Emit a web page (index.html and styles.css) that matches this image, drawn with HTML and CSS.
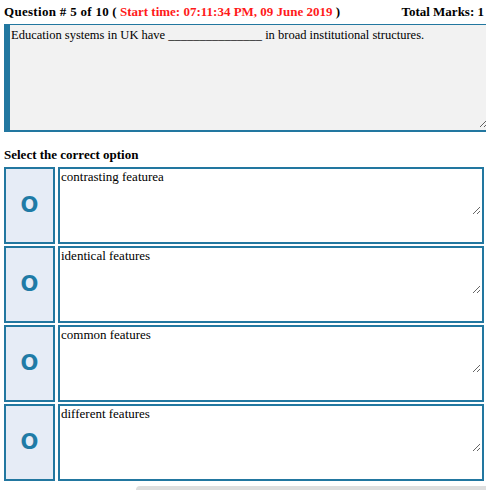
FILE: index.html
```html
<!DOCTYPE html>
<html>
<head>
<meta charset="utf-8">
<link rel="stylesheet" href="styles.css">
</head>
<body>
<div class="page">
  <div class="header">
    <div class="q-title"><span class="q-num">Question # 5 of 10</span> ( <span class="time">Start time: 07:11:34 PM, 09 June 2019</span> )</div>
    <div class="marks">Total Marks: 1</div>
  </div>
  <div class="question-box">
    <textarea class="question" readonly>Education systems in UK have _______________ in broad institutional structures.</textarea>
  </div>
  <div class="select-label">Select the correct option</div>
  <div class="options">
    <div class="option">
      <div class="radio-cell"><span class="radio">O</span></div>
      <div class="answer-box"><textarea class="answer" readonly>contrasting featurea</textarea></div>
    </div>
    <div class="option">
      <div class="radio-cell"><span class="radio">O</span></div>
      <div class="answer-box"><textarea class="answer" readonly>identical features</textarea></div>
    </div>
    <div class="option">
      <div class="radio-cell"><span class="radio">O</span></div>
      <div class="answer-box"><textarea class="answer" readonly>common features</textarea></div>
    </div>
    <div class="option">
      <div class="radio-cell"><span class="radio">O</span></div>
      <div class="answer-box"><textarea class="answer" readonly>different features</textarea></div>
    </div>
  </div>
  <div class="footer-bar"></div>
</div>
</body>
</html>
```
FILE: styles.css
```css
html, body {
  margin: 0;
  padding: 0;
  background: #ffffff;
  overflow: hidden;
}
body {
  font-family: "Liberation Serif", "Times New Roman", serif;
  font-size: 13px;
  color: #000;
}
.page {
  width: 500px;
  padding: 4px 0 0 4px;
}
.header {
  display: flex;
  justify-content: space-between;
  width: 480px;
  font-weight: bold;
  font-size: 13px;
  line-height: 16px;
  height: 20px;
  white-space: nowrap;
}
.q-num {
  letter-spacing: 0.3px;
}
.time {
  color: #ff1a1a;
}
.question-box {
  box-sizing: border-box;
  width: 500px;
  height: 108px;
  border-top: 1px solid #2277a0;
  border-bottom: 2px solid #2277a0;
  border-left: 6px solid #2277a0;
  background: #f2f2f2;
  padding-top: 1px;
}
.question {
  display: block;
  box-sizing: border-box;
  width: 478px;
  height: 102px;
  margin: 0;
  border: none;
  background: transparent;
  font-family: "Liberation Serif", "Times New Roman", serif;
  font-size: 12.5px;
  line-height: 15px;
  padding: 2px 1px;
  color: #000;
  resize: vertical;
  outline: none;
}
.select-label {
  font-weight: bold;
  margin-top: 15px;
  line-height: 16px;
  height: 16px;
}
.options {
  display: flex;
  flex-direction: column;
  gap: 2px;
  margin-top: 4px;
}
.option {
  display: flex;
  gap: 3px;
  height: 77px;
}
.radio-cell {
  box-sizing: border-box;
  width: 51px;
  height: 77px;
  border: 2px solid #2277a0;
  background: #e6ecf6;
  display: flex;
  align-items: center;
  justify-content: center;
}
.radio {
  font-family: "DejaVu Sans", sans-serif;
  font-weight: bold;
  font-size: 21px;
  color: #1f7ba6;
  line-height: 1;
}
.answer-box {
  box-sizing: border-box;
  width: 426px;
  height: 77px;
  border: 2px solid #2277a0;
  background: #fff;
}
.answer {
  display: block;
  box-sizing: border-box;
  width: 421px;
  height: 46px;
  margin: 0;
  border: none;
  background: transparent;
  font-family: "Liberation Serif", "Times New Roman", serif;
  font-size: 13px;
  line-height: 15px;
  padding: 0 1px;
  color: #000;
  resize: vertical;
  outline: none;
}
.footer-bar {
  margin: 5px 0 0 132px;
  height: 10px;
  background: #dedede;
  border-radius: 4px 0 0 0;
}
```
